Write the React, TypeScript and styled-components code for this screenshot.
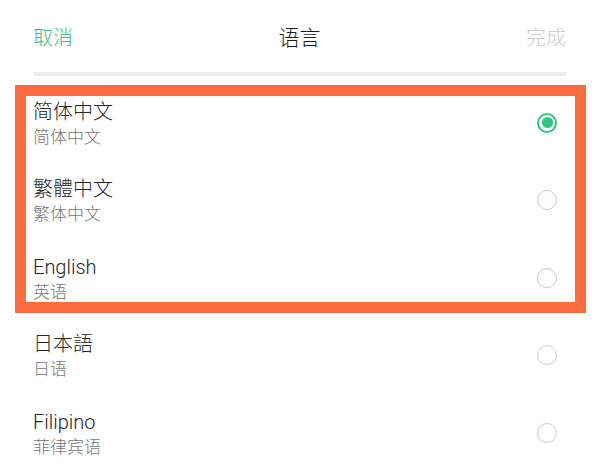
import styled, { createGlobalStyle } from 'styled-components';

const GlobalStyle = createGlobalStyle`
  html, body {
    margin: 0;
    padding: 0;
    background: #fff;
  }
  body {
    font-family: Roboto, "Noto Sans CJK SC", "Noto Sans", sans-serif;
    -webkit-font-smoothing: antialiased;
  }
`;

const Page = styled.div`
  width: 599px;
  height: 466px;
  overflow: hidden;
  background: #fff;
`;

const Header = styled.div`
  display: grid;
  grid-template-columns: 1fr auto 1fr;
  align-items: center;
  height: 72px;
  padding: 0 33px 0 33px;
  box-sizing: border-box;
`;

const HeaderAction = styled.span<{ $muted?: boolean; $right?: boolean }>`
  font-size: 20px;
  font-weight: 300;
  color: ${(p) => (p.$muted ? '#cdcdcd' : '#3dbf83')};
  justify-self: ${(p) => (p.$right ? 'end' : 'start')};
`;

const HeaderTitle = styled.span`
  font-size: 21px;
  font-weight: 300;
  color: #1a1a1a;
`;

const Divider = styled.div`
  height: 4px;
  margin: 0 33px 0 34px;
  background: #ededed;
`;

const List = styled.div`
  display: flex;
  flex-direction: column;
  padding-top: 8px;
`;

const Highlight = styled.div`
  position: relative;

  &::after {
    content: '';
    position: absolute;
    top: 1px;
    left: 15px;
    right: 13px;
    bottom: 4px;
    border: 11px solid #fd6c3c;
    pointer-events: none;
  }
`;

const Row = styled.div`
  display: flex;
  align-items: center;
  justify-content: space-between;
  height: 77.5px;
  padding: 0 42px 0 33px;
  box-sizing: border-box;
`;

const Labels = styled.div`
  display: flex;
  flex-direction: column;
  padding-top: 2px;
`;

const Name = styled.span`
  font-size: 20px;
  font-weight: 300;
  line-height: 24px;
  color: #262626;
`;

const Sub = styled.span`
  font-size: 17px;
  font-weight: 300;
  line-height: 22px;
  margin-top: 2px;
  color: #777;
`;

const Radio = styled.span<{ $checked?: boolean }>`
  width: 20px;
  height: 20px;
  box-sizing: border-box;
  border-radius: 50%;
  border: ${(p) => (p.$checked ? '2.5px solid #2ec77e' : '1.5px solid #cbcbcb')};
  display: flex;
  align-items: center;
  justify-content: center;

  &::before {
    content: '';
    width: 11px;
    height: 11px;
    border-radius: 50%;
    background: ${(p) => (p.$checked ? '#2ec77e' : 'transparent')};
  }
`;

type Lang = { name: string; sub: string; checked?: boolean };

const highlighted: Lang[] = [
  { name: '简体中文', sub: '简体中文', checked: true },
  { name: '繁體中文', sub: '繁体中文' },
  { name: 'English', sub: '英语' },
];

const rest: Lang[] = [
  { name: '日本語', sub: '日语' },
  { name: 'Filipino', sub: '菲律宾语' },
];

const LangRow = ({ lang }: { lang: Lang }) => (
  <Row>
    <Labels>
      <Name>{lang.name}</Name>
      <Sub>{lang.sub}</Sub>
    </Labels>
    <Radio $checked={lang.checked} />
  </Row>
);

const App = () => {
  return (
    <Page>
      <GlobalStyle />
      <Header>
        <HeaderAction>取消</HeaderAction>
        <HeaderTitle>语言</HeaderTitle>
        <HeaderAction $muted $right>
          完成
        </HeaderAction>
      </Header>
      <Divider />
      <List>
        <Highlight>
          {highlighted.map((l) => (
            <LangRow key={l.name} lang={l} />
          ))}
        </Highlight>
        {rest.map((l) => (
          <LangRow key={l.name} lang={l} />
        ))}
      </List>
    </Page>
  );
};

export default App;
